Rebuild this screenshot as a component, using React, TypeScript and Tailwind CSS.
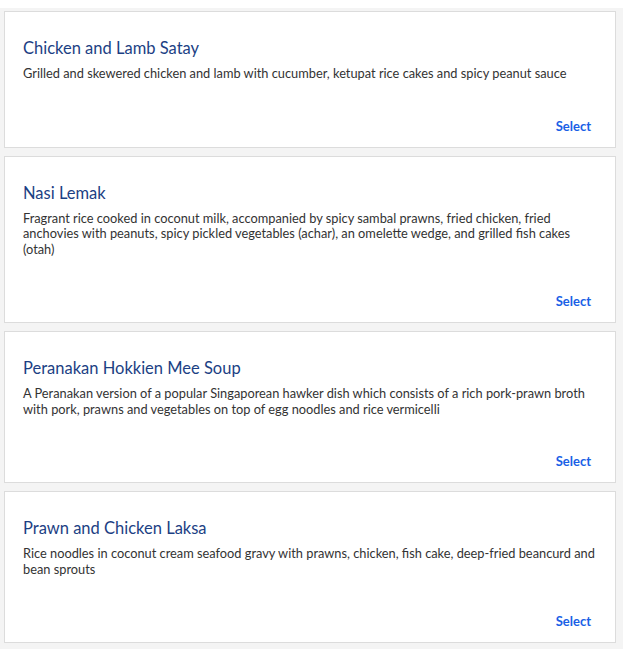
import React from "react";

const items = [
  {
    title: "Chicken and Lamb Satay",
    desc: "Grilled and skewered chicken and lamb with cucumber, ketupat rice cakes and spicy peanut sauce",
  },
  {
    title: "Nasi Lemak",
    desc: "Fragrant rice cooked in coconut milk, accompanied by spicy sambal prawns, fried chicken, fried anchovies with peanuts, spicy pickled vegetables (achar), an omelette wedge, and grilled fish cakes (otah)",
  },
  {
    title: "Peranakan Hokkien Mee Soup",
    desc: "A Peranakan version of a popular Singaporean hawker dish which consists of a rich pork-prawn broth with pork, prawns and vegetables on top of egg noodles and rice vermicelli",
  },
  {
    title: "Prawn and Chicken Laksa",
    desc: "Rice noodles in coconut cream seafood gravy with prawns, chicken, fish cake, deep-fried beancurd and bean sprouts",
  },
];

export default function App() {
  return (
    <div className="min-h-[656px] w-[629px] bg-white" style={{ fontFamily: "Lato, 'Open Sans', sans-serif" }}>
      <div className="mt-[8px] flex w-[623px] flex-col gap-[8px] bg-[#f4f4f4] pb-[6px] pl-[4px] pr-[7px] pt-[3px]">
        {items.map((it) => (
          <div key={it.title} className="flex flex-col border border-[#dcdcdc] bg-white pb-[13px] pl-[18px] pr-[18px] pt-[26px]">
            <h2 className="text-[16.5px] leading-[20px] text-[#1c3f84]">{it.title}</h2>
            <p className="mt-[8px] text-[12.8px] leading-[15.5px] text-[#333333]">{it.desc}</p>
            <div className="mt-[36px] flex justify-end pr-[6px]">
              <button className="text-[13px] font-bold leading-[16px] text-[#1a5fe6]">Select</button>
            </div>
          </div>
        ))}
      </div>
    </div>
  );
}
